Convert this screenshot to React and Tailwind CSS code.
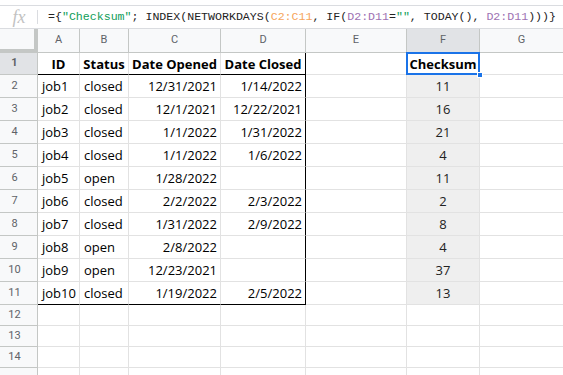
import React from "react";

const COLS = [
  { key: "A", w: "w-[42px]" },
  { key: "B", w: "w-[49px]" },
  { key: "C", w: "w-[92px]" },
  { key: "D", w: "w-[85px]" },
  { key: "E", w: "w-[101px]" },
  { key: "F", w: "w-[73px]" },
];

const jobs = [
  ["job1", "closed", "12/31/2021", "1/14/2022", 11],
  ["job2", "closed", "12/1/2021", "12/22/2021", 16],
  ["job3", "closed", "1/1/2022", "1/31/2022", 21],
  ["job4", "closed", "1/1/2022", "1/6/2022", 4],
  ["job5", "open", "1/28/2022", "", 11],
  ["job6", "closed", "2/2/2022", "2/3/2022", 2],
  ["job7", "closed", "1/31/2022", "2/9/2022", 8],
  ["job8", "open", "2/8/2022", "", 4],
  ["job9", "open", "12/23/2021", "", 37],
  ["job10", "closed", "1/19/2022", "2/5/2022", 13],
];

const RowHead = ({ n, active }) => (
  <div
    className={`w-[38px] shrink-0 flex items-center justify-center pr-[8px] border-r border-b border-[#c4c7c5] text-[11px] text-[#5f6368] font-['Roboto',sans-serif] ${
      active ? "bg-[#e1e3e6]" : "bg-[#f8f9fa]"
    }`}
  >
    {n}
  </div>
);

const Formula = () => (
  <div className="h-[24px] flex items-center border-t border-b border-[#dadce0] bg-white">
    <div className="w-[37px] flex items-center justify-center text-[#c2c2c2] font-['Liberation_Serif',serif] italic text-[18px] leading-none pl-[1px]">
      fx
    </div>
    <div className="w-px h-[14px] bg-[#dadce0]" />
    <div className="pl-[10px] whitespace-nowrap text-[11.6px] text-[#222] font-['Liberation_Mono',monospace]">
      ={"{"}
      <span className="text-[#0f9d58]">"Checksum"</span>; INDEX(NETWORKDAYS(
      <span className="text-[#f6a55b]">C2:C11</span>, IF(
      <span className="text-[#9e72b3]">D2:D11</span>=
      <span className="text-[#0f9d58]">""</span>, TODAY(),{" "}
      <span className="text-[#9e72b3]">D2:D11</span>))){"}"}
    </div>
  </div>
);

const ColHeaders = () => (
  <div className="h-[24px] flex bg-[#f8f9fa] text-[11px] text-[#5f6368] font-['Roboto',sans-serif]">
    <div className="w-[38px] shrink-0 border-r-[4px] border-b-[4px] border-[#c4c7c5] bg-[#f8f9fa]" />
    {COLS.map((c) => (
      <div
        key={c.key}
        className={`${c.w} shrink-0 flex items-center justify-center border-r border-b border-[#c4c7c5] ${
          c.key === "F" ? "bg-[#e1e3e6]" : ""
        }`}
      >
        {c.key}
      </div>
    ))}
    <div className="flex-1 flex items-center justify-center border-b border-[#c4c7c5]">G</div>
  </div>
);

const cell = "shrink-0 flex items-center border-r border-b px-[4px] pt-[2px] whitespace-nowrap";

export default function App() {
  return (
    <div className="w-[563px] h-[375px] overflow-hidden bg-white font-['Open_Sans',sans-serif] text-[13px] text-black">
      <div className="h-[5px]" />
      <Formula />
      <ColHeaders />

      {/* header row */}
      <div className="h-[22px] flex font-bold">
        <RowHead n={1} active />
        <div className={`${cell} w-[42px] justify-center border-r-[#e2e2e2] border-b-black`}>ID</div>
        <div className={`${cell} w-[49px] justify-center border-r-[#e2e2e2] border-b-black`}>Status</div>
        <div className={`${cell} w-[92px] justify-center border-r-[#e2e2e2] border-b-black`}>Date Opened</div>
        <div className={`${cell} w-[85px] justify-center border-r-black border-b-black`}>Date Closed</div>
        <div className={`${cell} w-[101px] border-[#e2e2e2]`} />
        <div className={`${cell} w-[73px] justify-center border-[#e2e2e2] relative`}>
          Checksum
          <span className="absolute -left-px -top-px -right-px -bottom-px border-2 border-[#1a73e8]" />
          <span className="absolute -right-[4px] -bottom-[4px] w-[6px] h-[6px] bg-[#1a73e8] border border-white" />
        </div>
        <div className="flex-1 border-b border-[#e2e2e2]" />
      </div>

      {jobs.map((j, i) => {
        const last = i === jobs.length - 1;
        const b = last ? "border-b-black" : "border-b-[#e2e2e2]";
        return (
          <div key={j[0]} className="h-[23px] flex">
            <RowHead n={i + 2} />
            <div className={`${cell} w-[42px] border-r-[#e2e2e2] ${b}`}>{j[0]}</div>
            <div className={`${cell} w-[49px] border-r-[#e2e2e2] ${b}`}>{j[1]}</div>
            <div className={`${cell} w-[92px] justify-end pr-[3px] border-r-[#e2e2e2] ${b}`}>{j[2]}</div>
            <div className={`${cell} w-[85px] justify-end pr-[3px] border-r-black ${b}`}>{j[3]}</div>
            <div className={`${cell} w-[101px] border-[#e2e2e2]`} />
            <div className={`${cell} w-[73px] justify-center bg-[#efefef] border-[#e2e2e2] text-[#222]`}>{j[4]}</div>
            <div className="flex-1 border-b border-[#e2e2e2]" />
          </div>
        );
      })}

      {[12, 13, 14].map((n) => (
        <div key={n} className="h-[21px] flex">
          <RowHead n={n} />
          {COLS.map((c) => (
            <div key={c.key} className={`${cell} ${c.w} border-[#e2e2e2]`} />
          ))}
          <div className="flex-1 border-b border-[#e2e2e2]" />
        </div>
      ))}
      <div className="h-[21px] flex">
        <div className="w-[38px] shrink-0 border-r border-[#c4c7c5] bg-[#f8f9fa]" />
        {COLS.map((c) => (
          <div key={c.key} className={`shrink-0 border-r border-[#e2e2e2] ${c.w}`} />
        ))}
      </div>
    </div>
  );
}
